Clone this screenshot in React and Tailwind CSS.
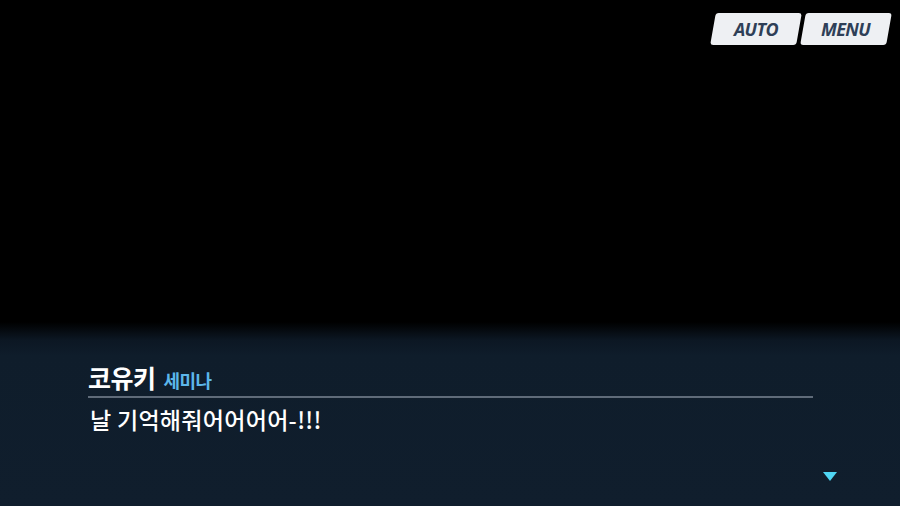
import React from 'react'

const KR = { fontFamily: '"Noto Sans CJK KR", "Noto Sans", sans-serif' }

function SkewButton({ label }) {
  return (
    <button className="h-[32px] w-[86px] -skew-x-[10deg] rounded-[3px] bg-[#eef0f3] flex items-center justify-center shadow-[0_1px_2px_rgba(0,0,0,0.4)]">
      <span
        className="skew-x-[10deg] italic font-bold text-[18px] tracking-[-0.6px] text-[#2e3f57]"
        style={{ fontFamily: '"Open Sans", "Liberation Sans", sans-serif' }}
      >
        {label}
      </span>
    </button>
  )
}

export default function App() {
  return (
    <div className="w-[900px] h-[506px] bg-black flex flex-col overflow-hidden" style={KR}>
      {/* top scene */}
      <div className="h-[322px] flex justify-end items-start pt-[13px] pr-[11px] gap-[4px]">
        <SkewButton label="AUTO" />
        <SkewButton label="MENU" />
      </div>

      {/* dialogue panel */}
      <div className="flex-1 bg-[linear-gradient(to_bottom,#000_0px,#0c1723_18px,#0f1d2b_34px,#101e2d_100%)] pl-[88px] pr-[87px] pt-[34px] flex flex-col">
        <div className="flex items-end gap-[8px] h-[34px]">
          <span className="text-[25px] font-bold text-white leading-none tracking-[-0.5px]">코유키</span>
          <span className="text-[18px] font-bold text-[#5cb6ea] leading-none mb-[1px] tracking-[-0.6px]">세미나</span>
        </div>
        <div className="h-[2px] bg-[#5f6b79] mt-[6px]" />
        <div className="mt-[6px] pl-[2px] text-[23px] font-medium text-white leading-[30px] tracking-[0.3px]">
          날 기억해줘어어어어-!!!
        </div>
        <div className="flex-1 flex justify-end items-start pt-[38px]">
          <svg width="14" height="9" viewBox="0 0 14 9" className="mr-[-24px]">
            <polygon points="0,0 14,0 7,9" fill="#4fd6f4" />
          </svg>
        </div>
      </div>
    </div>
  )
}
